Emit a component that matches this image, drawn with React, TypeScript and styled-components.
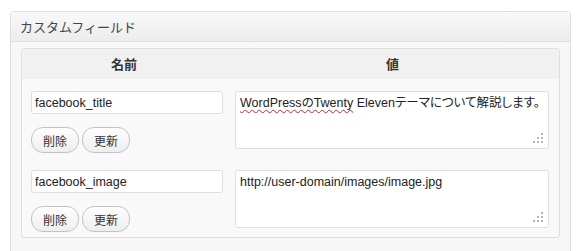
import React from 'react';
import styled, {createGlobalStyle} from 'styled-components';

const GlobalStyle = createGlobalStyle`
  html, body {
    margin: 0;
    padding: 0;
    background: #fff;
  }
  body {
    font-family: "Liberation Sans", "Noto Sans CJK JP", sans-serif;
    font-size: 13px;
    color: #333;
  }
`;

const PostBox = styled.div`
  width: 561px;
  height: 260px;
  margin: 11px 0 0 10px;
  box-sizing: border-box;
  border: 1px solid #dfdfdf;
  border-radius: 3px 3px 0 0;
  background: #f7f7f7;
`;

const BoxHeader = styled.h3`
  margin: 0;
  height: 29px;
  padding: 0 0 0 9px;
  border-bottom: 1px solid #dfdfdf;
  background: linear-gradient(to bottom, #f9f9f9, #ececec);
  font-size: 13px;
  font-weight: normal;
  line-height: 31px;
  color: #464646;
`;

const Inside = styled.div`
  padding: 6px 10px 0;
`;

const FieldTable = styled.div`
  border: 1px solid #dfdfdf;
  border-radius: 3px;
  background: #f9f9f9;
  overflow: hidden;
`;

const HeadRow = styled.div`
  display: grid;
  grid-template-columns: 204px 333px;
  height: 30px;
  background: #f1f1f1;
`;

const HeadCell = styled.div`
  font-weight: bold;
  text-align: center;
  line-height: 31px;
  color: #333;
`;

const FieldRow = styled.div`
  display: grid;
  grid-template-columns: 204px 333px;
  padding: 12px 0 5px;
`;

const NameCell = styled.div`
  display: flex;
  flex-direction: column;
  align-items: flex-start;
  gap: 13px;
  padding-left: 9px;
`;

const KeyInput = styled.input`
  box-sizing: border-box;
  width: 192px;
  height: 23px;
  margin: 0;
  padding: 0 3px;
  border: 1px solid #dfdfdf;
  border-radius: 3px;
  background: #fff;
  font: 12.5px "Liberation Sans", "Noto Sans CJK JP", sans-serif;
  color: #222;
  outline: none;
`;

const Buttons = styled.div`
  display: flex;
  gap: 3px;
`;

const PillButton = styled.button`
  box-sizing: border-box;
  width: 48px;
  height: 26px;
  margin: 0;
  padding: 0;
  border: 1px solid #c3c3c3;
  border-radius: 12px;
  background: linear-gradient(to bottom, #fefefe, #eeeeee);
  font: 12px "Liberation Sans", "Noto Sans CJK JP", sans-serif;
  color: #333;
  cursor: pointer;
`;

const ValueCell = styled.div`
  padding-left: 9px;
`;

const ValueBox = styled.div`
  position: relative;
  box-sizing: border-box;
  width: 314px;
  height: 58px;
  padding: 3px 4px;
  border: 1px solid #dfdfdf;
  border-radius: 3px;
  background: #fff;
  font-size: 12.5px;
  font-feature-settings: "palt";
  line-height: 17px;
  color: #222;
`;

const Misspelt = styled.span`
  text-decoration: underline wavy #e02020;
  text-decoration-thickness: 1px;
  text-decoration-skip-ink: none;
  text-underline-offset: 2px;
`;

const Grip = styled.svg`
  position: absolute;
  right: 5px;
  bottom: 5px;
`;

function ResizeGrip() {
  const dots = [[8, 0], [4, 4], [8, 4], [0, 8], [4, 8], [8, 8]];
  return (
    <Grip width="10" height="10" viewBox="0 0 10 10">
      {dots.map(([x, y]) => (
        <rect key={`${x}-${y}`} x={x} y={y} width="2" height="2" fill="#b4b4b4"/>
      ))}
    </Grip>
  );
}

type Field = {key: string; value: React.ReactNode};

const fields: Field[] = [
  {
    key: 'facebook_title',
    value: <><Misspelt>WordPressのTwenty</Misspelt> Elevenテーマについて解説します。</>
  },
  {key: 'facebook_image', value: 'http://user-domain/images/image.jpg'}
];

function App() {
  return (
    <>
      <GlobalStyle/>
      <PostBox>
        <BoxHeader>カスタムフィールド</BoxHeader>
        <Inside>
          <FieldTable>
            <HeadRow>
              <HeadCell>名前</HeadCell>
              <HeadCell>値</HeadCell>
            </HeadRow>
            {fields.map(f => (
              <FieldRow key={f.key}>
                <NameCell>
                  <KeyInput type="text" defaultValue={f.key}/>
                  <Buttons>
                    <PillButton>削除</PillButton>
                    <PillButton>更新</PillButton>
                  </Buttons>
                </NameCell>
                <ValueCell>
                  <ValueBox>
                    {f.value}
                    <ResizeGrip/>
                  </ValueBox>
                </ValueCell>
              </FieldRow>
            ))}
          </FieldTable>
        </Inside>
      </PostBox>
    </>
  );
}

export default App;
